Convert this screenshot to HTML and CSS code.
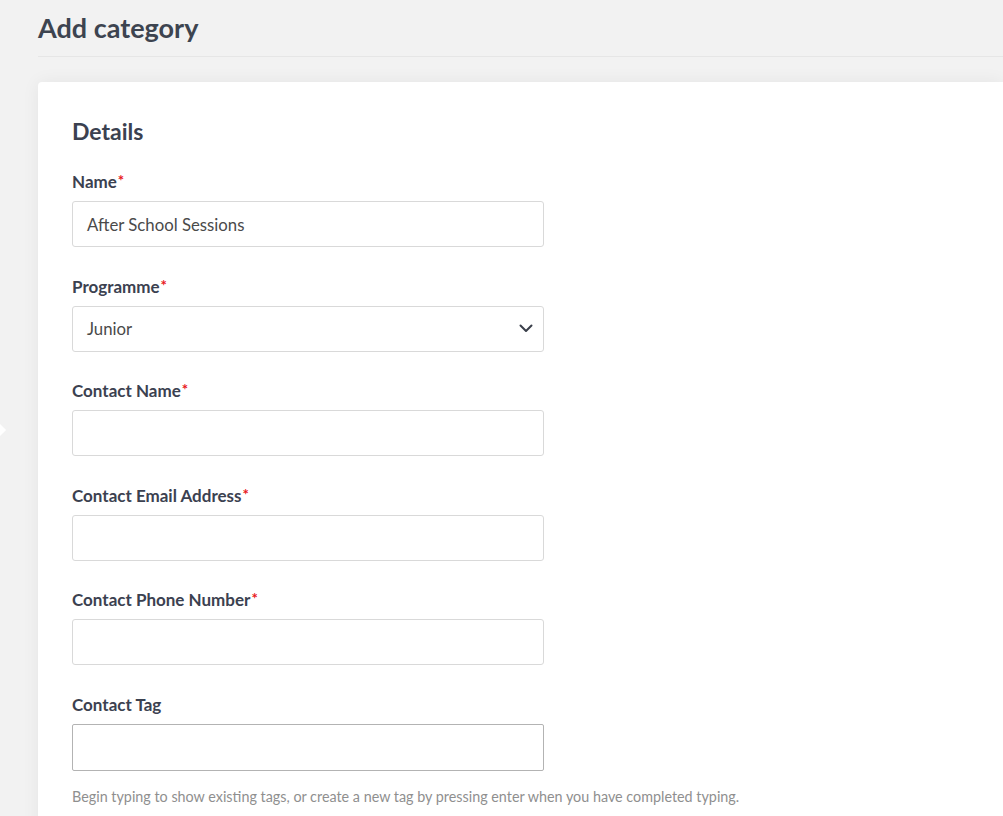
FILE: index.html
```html
<!DOCTYPE html>
<html lang="en">
<head>
<meta charset="utf-8">
<title>Add category</title>
<link rel="stylesheet" href="styles.css">
</head>
<body>
<div class="edge-toggle"></div>
<main class="page">
  <header class="page-header">
    <h1 class="page-title">Add category</h1>
  </header>
  <section class="card">
    <h2 class="card-title">Details</h2>
    <div class="field">
      <label class="label">Name<span class="req">*</span></label>
      <div class="input">After School Sessions</div>
    </div>
    <div class="field">
      <label class="label">Programme<span class="req">*</span></label>
      <div class="input select">
        <span>Junior</span>
        <svg class="chev" width="14" height="9" viewBox="0 0 14 9"><path d="M1.5 1.5 L7 7 L12.5 1.5" fill="none" stroke="#3a3f4a" stroke-width="2" stroke-linecap="round" stroke-linejoin="round"/></svg>
      </div>
    </div>
    <div class="field">
      <label class="label">Contact Name<span class="req">*</span></label>
      <div class="input"></div>
    </div>
    <div class="field">
      <label class="label">Contact Email Address<span class="req">*</span></label>
      <div class="input"></div>
    </div>
    <div class="field">
      <label class="label">Contact Phone Number<span class="req">*</span></label>
      <div class="input"></div>
    </div>
    <div class="field">
      <label class="label">Contact Tag</label>
      <div class="input tag"></div>
      <p class="help">Begin typing to show existing tags, or create a new tag by pressing enter when you have completed typing.</p>
    </div>
  </section>
</main>
</body>
</html>
```

FILE: styles.css
```css
html, body {
  margin: 0;
  padding: 0;
  background: #f2f2f2;
  font-family: Lato, "Open Sans", sans-serif;
  color: #3b4150;
  overflow: hidden;
}
.edge-toggle {
  position: absolute;
  left: -6px;
  top: 425px;
  width: 10px;
  height: 10px;
  background: #ffffff;
  transform: rotate(45deg);
}
.page {
  padding-left: 38px;
}
.page-header {
  padding-top: 12px;
  padding-bottom: 12px;
  border-bottom: 1px solid #e6e6e6;
}
.page-title {
  margin: 0;
  font-size: 27px;
  line-height: 32px;
  font-weight: 700;
  color: #3d4450;
}
.card {
  margin-top: 25px;
  background: #ffffff;
  border-radius: 4px 0 0 0;
  box-shadow: 0 0 18px rgba(0, 0, 0, 0.06);
  padding: 34px 34px 40px;
  min-height: 800px;
}
.card-title {
  margin: 0 0 24px;
  font-size: 23px;
  line-height: 30px;
  font-weight: 700;
  color: #3b4150;
}
.field {
  width: 472px;
  margin-bottom: 27.5px;
}
.label {
  display: block;
  height: 24px;
  font-size: 17px;
  line-height: 24px;
  font-weight: 700;
  color: #3b4150;
  margin-bottom: 7px;
}
.req {
  color: #e8161b;
  font-size: 15px;
  line-height: 0;
  position: relative;
  top: -2px;
  margin-left: 1px;
}
.input {
  box-sizing: border-box;
  height: 46px;
  border: 1px solid #d9d9d9;
  border-radius: 3px;
  padding: 0 14px;
  display: flex;
  align-items: center;
  font-size: 16.75px;
  color: #4a4a4a;
}
.select {
  justify-content: space-between;
  padding-right: 10px;
}
.chev {
  display: block;
}
.tag {
  height: 47px;
  border-color: #b3b3b3;
  border-radius: 2px;
}
.help {
  margin: 16px 0 0;
  font-size: 14.35px;
  line-height: 20px;
  color: #8f8f8f;
  white-space: nowrap;
}
```
